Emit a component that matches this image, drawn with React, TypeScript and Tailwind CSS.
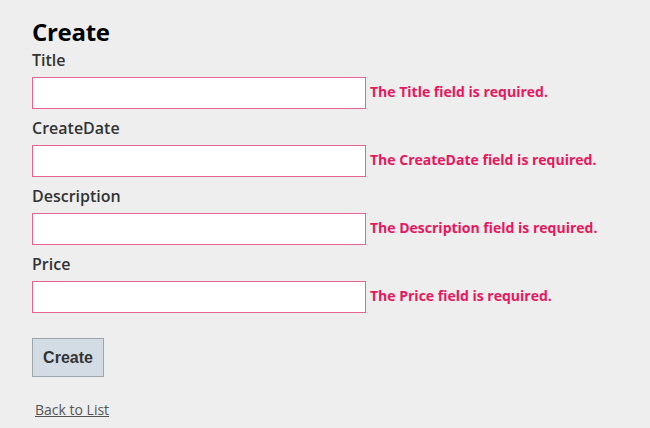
import React from "react";

const fields = ["Title", "CreateDate", "Description", "Price"];

export default function App() {
  return (
    <div className="w-[650px] h-[428px] bg-[#eeeeee] pl-[32px] pt-[16px] font-['Open_Sans',sans-serif]">
      <h2 className="text-[24px] font-bold leading-[32px] text-black tracking-[-0.3px]">Create</h2>
      <div className="flex flex-col">
        {fields.map((f) => (
          <div key={f} className="flex flex-col">
            <label className="text-[16px] font-semibold leading-[24px] text-[#333333]">{f}</label>
            <div className="flex items-center mt-[5px] mb-[7px]">
              <input className="w-[334px] h-[32px] bg-white border border-[#e7648f] outline-none" />
              <span className="ml-[4px] text-[14px] font-bold leading-[20px] text-[#e8175d] -mt-[2px]">
                The {f} field is required.
              </span>
            </div>
          </div>
        ))}
      </div>
      <button className="mt-[18px] w-[72px] h-[39px] bg-[#d3dce4] border border-[#9ea5ab] font-['Liberation_Sans',Arial,sans-serif] font-bold text-[16px] text-[#333333]">
        Create
      </button>
      <div className="mt-[20px] ml-[3px]">
        <a href="#" className="text-[14px] text-[#555555] underline">Back to List</a>
      </div>
    </div>
  );
}
